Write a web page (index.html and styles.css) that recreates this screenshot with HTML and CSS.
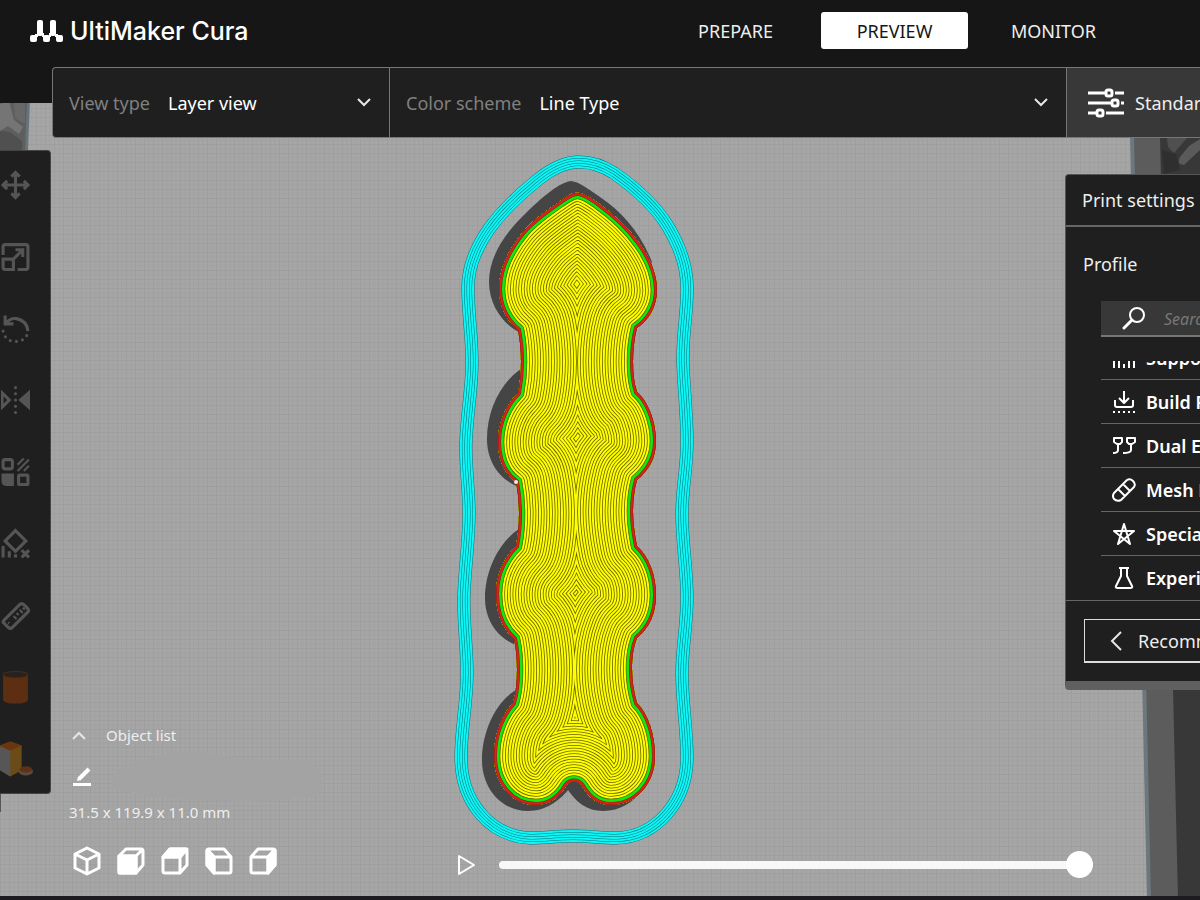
FILE: index.html
```html
<!DOCTYPE html>
<html lang="en">
<head>
    <meta charset="UTF-8">
    <meta name="viewport" content="width=device-width, initial-scale=1.0">
    <title>UltiMaker Cura</title>
    <link rel="stylesheet" href="styles.css">
</head>
<body>
<div class="app">
    <svg class="scene" viewBox="0 0 1200 900" preserveAspectRatio="xMidYMid slice" aria-hidden="true">
        <defs>
            <pattern id="grid" width="9" height="9" patternUnits="userSpaceOnUse">
                <path d="M0 .5H9M.5 0V9" stroke="#9e9e9e" stroke-width="1"/>
                <path d="M0 5H9M5 0V9" stroke="#a1a1a1" stroke-width="1"/>
            </pattern>
            <path id="model" d="M579 193C586 194 592 199 598 203C612 213 628 227 640 244C650 258 657 274 657 290C657 306 649 320 637 328C634 339 633 351 633 362C633 373 634 383 637 392C648 401 656 422 656 441C656 458 649 470 637 480C634 491 633 501 633 512C633 524 635 536 637 546C649 557 656 575 656 595C656 614 649 628 637 638C633 648 632 658 632 669C632 681 634 693 637 703C648 714 655 734 655 756C655 784 636 805 611 805C595 805 587 794 582 786C578 780 570 780 566 786C560 796 550 805 536 805C512 805 494 784 494 756C494 734 502 715 513 703C516 693 517 681 517 670C517 659 516 648 514 639C503 629 496 613 496 594C496 575 504 558 516 546C518 536 519 525 519 514C519 503 518 492 516 482C505 474 498 460 498 442C498 423 506 405 518 393C520 383 521 373 521 362C521 351 520 340 518 330C507 321 499 306 499 289C499 269 509 249 523 232C534 219 549 209 562 200C568 196 573 192 579 193Z"/>
            <path id="skirt" d="M579 162C592 162 603 166 614 173C634 187 654 204 667 225C680 246 688 267 687 292C687 314 682 338 683 364C684 390 687 416 687 442C687 468 682 488 682 514C682 542 687 570 687 598C687 624 682 648 682 673C682 702 687 730 687 757C687 802 656 837 616 838C602 838 588 836 573 836C558 836 544 838 530 838C490 836 461 802 461 757C461 729 467 702 467 673C467 646 463 621 464 594C465 567 469 540 469 513C469 488 465 465 466 441C467 414 472 388 472 362C472 337 468 312 468 288C468 266 477 246 489 229C502 211 519 195 535 182C548 171 563 162 579 162Z"/>
            <clipPath id="modelClip"><use href="#model"/></clipPath>
        </defs>
        <rect width="1200" height="900" fill="#a6a6a6"/>
        <rect width="1200" height="900" fill="url(#grid)"/>
        <path d="M122 768Q150 752 200 753Q250 760 310 762Q330 775 318 794Q260 806 200 800Q130 796 116 788Q108 778 122 768Z" fill="#a3a3a3"/>
        <path d="M0 780L0 812" stroke="#555" stroke-width="2"/>

        <!-- left edge of the plate -->
        <path d="M0 100H29L27 150H0Z" fill="#5e5e5e"/>
        <path d="M0 104L9 101L14 120L23 127L19 134L8 126L0 131Z" fill="#757575"/>
        <path d="M14 101H25V124L15 118Z" fill="#686868"/>
        <path d="M0 131L10 132L22 141V150H0Z" fill="#505050"/>
        <path d="M27 100H30L28 150H25Z" fill="#66737a"/>

        <!-- right edge of the plate -->
        <path d="M1131 136H1200V900H1148Z" fill="#5c5c5c"/>
        <path d="M1130 136H1134L1151 900H1147Z" fill="#6c787e"/>
        <path d="M1160 136H1200V900H1178Z" fill="#383838"/>
        <path d="M1167 138H1187L1174 153L1168 147Z" fill="#505050"/>
        <path d="M1189 146L1200 139V150L1184 165Q1176 164 1180 157Z" fill="#5a5a5a"/>
        <path d="M1162 150L1176 154L1180 170L1164 174Z" fill="#2f2f2f"/>

        <!-- shadow of the model on the plate -->
        <path d="M571 181C580 182 588 189 600 197C622 212 640 232 652 262L630 300H540V332H519C503 324 489 305 489 282C489 258 503 236 522 217C537 202 557 183 571 181Z" fill="#454545"/>
        <path d="M530 364C503 376 487 408 487 439C487 462 500 480 519 487L540 440ZM530 523C502 534 485 568 485 598C485 621 498 638 516 645L540 600ZM530 685C500 690 482 728 482 760C482 789 502 811 528 811C546 811 560 800 568 790C576 802 587 811 603 811C620 811 634 802 642 790L570 740Z" fill="#454545"/>

        <g fill="none" stroke-linejoin="round">
            <use href="#skirt" class="skirt-gap" stroke-width="13"/>
            <use href="#skirt" class="skirt-line" stroke-width="12"/>
            <use href="#skirt" class="skirt-gap" stroke-width="8"/>
            <use href="#skirt" class="skirt-line" stroke-width="7"/>
            <use href="#skirt" class="skirt-gap" stroke-width="3"/>
            <use href="#skirt" class="skirt-line" stroke-width="2"/>
        </g>
        <g clip-path="url(#modelClip)" fill="none">
            <use href="#model" fill="#ff0"/>
            <g id="infill" stroke-linejoin="round"></g>
            <use href="#model" stroke="#4a7a00" stroke-width="12"/>
            <use href="#model" stroke="#10e810" stroke-width="11"/>
            <use href="#model" stroke="#54400c" stroke-width="6"/>
            <use href="#model" stroke="#dc201c" stroke-width="5"/>
            <use href="#model" stroke="#9a1a18" stroke-width="1"/>
        </g>
        <circle cx="516" cy="482" r="2" fill="#eee"/>
    </svg>

    <header class="topbar">
        <div class="brand">
            <svg width="34" height="24" viewBox="0 0 34 24" fill="#fff" aria-hidden="true">
                <rect x="0" y="16" width="7" height="7" rx="2"/>
                <rect x="13" y="16" width="7" height="7" rx="2"/>
                <rect x="26" y="16" width="7" height="7" rx="2"/>
                <rect x="7" y="1" width="6" height="16" rx="2"/>
                <rect x="20" y="1" width="6" height="16" rx="2"/>
                <path d="M5 15H8V18H5ZM12 14H14V18H12ZM19 14H21V18H19ZM25 15H28V18H25Z"/>
            </svg>
            <span>UltiMaker Cura</span>
        </div>
        <nav class="stages">
            <button type="button">PREPARE</button>
            <button type="button" class="active">PREVIEW</button>
            <button type="button">MONITOR</button>
        </nav>
    </header>

    <div class="menubar">
        <div class="field view-type">
            <label for="viewType">View type</label>
            <select id="viewType"><option>Layer view</option><option>X-Ray view</option></select>
            <svg width="14" height="9" viewBox="0 0 14 9"><path d="M1 1L7 7L13 1"/></svg>
        </div>
        <div class="field scheme">
            <label for="colorScheme">Color scheme</label>
            <select id="colorScheme"><option>Line Type</option><option>Material Color</option></select>
            <svg width="14" height="9" viewBox="0 0 14 9"><path d="M1 1L7 7L13 1"/></svg>
        </div>
        <button type="button" class="setup">
            <svg width="38" height="32" viewBox="0 0 38 32" fill="none" stroke="#fff" stroke-width="3" aria-hidden="true">
                <path d="M1 6H18M28 6H37M1 16H24M34 16H37M1 26H9M19 26H37"/>
                <rect x="19" y="3" width="6" height="6" rx="2"/>
                <rect x="25" y="13" width="6" height="6" rx="2"/>
                <rect x="10" y="23" width="6" height="6" rx="2"/>
            </svg>
            <span>Standard</span>
        </button>
    </div>

    <main class="workspace">
        <div class="tools">
            <button type="button" aria-label="Move"><svg viewBox="0 0 28 28"><path d="M14 2V26M2 14H26M10 6L14 2L18 6M10 22L14 26L18 22M6 10L2 14L6 18M22 10L26 14L22 18"/></svg></button>
            <button type="button" aria-label="Scale"><svg viewBox="0 0 28 28"><path d="M2 12V4Q2 2 4 2H24Q26 2 26 4V24Q26 26 24 26H16M2 16H10Q12 16 12 18V26H4Q2 26 2 24ZM12 16L21 7M14 7H21V14"/></svg></button>
            <button type="button" aria-label="Rotate"><svg viewBox="0 0 28 28"><path d="M4 1V9H12M4 9Q9 3 15 4Q25 6 26 16"/><path d="M2 16Q4 26 14 26Q23 26 26 18" stroke-dasharray="0 6" stroke-linecap="round"/></svg></button>
            <button type="button" aria-label="Mirror"><svg viewBox="0 0 28 28"><path d="M1 7V21L8 14Z"/><path d="M28 6V22L19 14Z" fill="currentColor"/><path d="M14 2V27" stroke-dasharray="0 6" stroke-linecap="round"/></svg></button>
            <button type="button" aria-label="Per model settings"><svg viewBox="0 0 28 28"><rect x="2" y="2" width="9" height="9" rx="2"/><rect x="17" y="17" width="9" height="9" rx="1"/><path d="M2 17H11V26H5Q2 26 2 23Z" fill="currentColor"/><path d="M16 7L22 1M16 13L27 2M22 13L27 8" stroke-width="2"/></svg></button>
            <button type="button" aria-label="Support blocker"><svg viewBox="0 0 28 28"><path d="M14 1L24 11L14 21L4 11Z"/><path d="M2 16V27M8 21V27M14 24V27M20 20L27 27M27 20L20 27"/></svg></button>
            <button type="button" aria-label="Measure"><svg viewBox="0 0 28 28"><path d="M3 18L18 3Q20 1 22 3L26 7Q27 9 26 10L11 25Q9 27 7 25L3 21Q1 20 3 18Z"/><path d="M12 14L15 17M15 11L17 13M18 8L21 11M21 6L23 8M7 20L8 21" stroke-width="2"/></svg></button>
            <button type="button" aria-label="Cylinder"><svg viewBox="0 0 28 34"><path d="M2 5V29Q2 33 14 33Q26 33 26 29V5Z" fill="#5c2e12" stroke="none"/><ellipse cx="14" cy="5" rx="12" ry="3" fill="#262220" stroke="#4a2a16" stroke-width="1"/></svg></button>
            <button type="button" aria-label="Custom supports"><svg viewBox="0 0 32 34"><path d="M0 4L10 0L21 4V28L10 34L0 28Z" fill="#6b4c18" stroke="none"/><path d="M0 4L10 0L21 4L10 9Z" fill="#6b3510" stroke="none"/><path d="M0 5L10 9V34L0 28Z" fill="#565656" stroke="none"/><ellipse cx="25" cy="29" rx="7" ry="4" fill="#5a4a40" stroke="none"/><ellipse cx="25" cy="27" rx="6" ry="3" fill="#5f3214" stroke="none"/></svg></button>
        </div>

        <div class="info">
            <button type="button" class="object-list">
                <svg width="14" height="9" viewBox="0 0 14 9"><path d="M1 8L7 2L13 8"/></svg>
                <span>Object list</span>
            </button>
            <button type="button" class="rename" aria-label="Rename">
                <svg width="20" height="20" viewBox="0 0 20 20"><path d="M1 18.500H19" stroke-width="3"/><path d="M7 13L17 3" stroke-width="4"/><path d="M5 15L6 11L9 14Z" fill="#fff" stroke="none"/></svg>
            </button>
            <p class="dimensions">31.5 x 119.9 x 11.0 mm</p>
            <div class="views">
                <button type="button" aria-label="3D view"><svg viewBox="0 0 28 28"><path d="M14 1L26 7V21L14 27L2 21V7ZM2 7L14 13L26 7M14 13V27"/></svg></button>
                <button type="button" aria-label="Front view"><svg viewBox="0 0 28 28"><path d="M2 9L9 2H24Q26 2 26 4V18L19 26H4Q2 26 2 24ZM2 9H19V26M19 9L26 2"/><path d="M2 9H19V26H2Z" fill="#fff"/></svg></button>
                <button type="button" aria-label="Top view"><svg viewBox="0 0 28 28"><path d="M2 10L9 2H24Q26 2 26 4V18L19 26H4Q2 26 2 24ZM2 10H19V26M19 10L26 2"/><path d="M2 10L9 2H26L19 10Z" fill="#fff"/></svg></button>
                <button type="button" aria-label="Left view"><svg viewBox="0 0 28 28"><path d="M26 10L19 2H4Q2 2 2 4V18L9 26H24Q26 26 26 24ZM26 10H9V26M9 10L2 2"/><path d="M2 3L9 10V26L2 18Z" fill="#fff"/></svg></button>
                <button type="button" aria-label="Right view"><svg viewBox="0 0 28 28"><path d="M2 10L9 2H24Q26 2 26 4V18L19 26H4Q2 26 2 24ZM2 10H19V26M19 10L26 2"/><path d="M19 10L26 3V18L19 26Z" fill="#fff"/></svg></button>
            </div>
        </div>

        <div class="simulation">
            <button type="button" aria-label="Play"><svg width="20" height="22" viewBox="0 0 20 22"><path d="M2 2V20L17 11Z"/></svg></button>
            <input type="range" min="0" max="100" value="100" aria-label="Path position">
        </div>

        <aside class="settings">
            <h2>Print settings</h2>
            <div class="profile">
                <h3>Profile</h3>
                <div class="search">
                    <svg width="24" height="24" viewBox="0 0 24 24" fill="none" stroke="#fff" stroke-width="2" stroke-linecap="round" aria-hidden="true"><circle cx="15" cy="9" r="7"/><path d="M10 14L2 22" stroke-width="3"/></svg>
                    <input type="search" placeholder="Search settings" aria-label="Search settings">
                </div>
                <div class="categories">
                    <button type="button"><svg viewBox="0 0 24 24"><path d="M2 12V22M7 15V22M12 18V22M17 15V22M22 12V22M3 3H21L12 11Z"/></svg><span>Support</span></button>
                    <button type="button"><svg viewBox="0 0 24 24"><path d="M12 1V12M7 8L12 13L17 8M3 10V15Q3 17 5 17H19Q21 17 21 15V10"/><path d="M1 22H23" stroke-width="2" stroke-dasharray="2 3"/></svg><span>Build Plate Adhesion</span></button>
                    <button type="button"><svg viewBox="0 0 24 24"><path d="M2 4H10V8L8 10H5L2 8ZM15 4H23V8L20 10H17L15 8ZM6 10V16Q6 19 1 19M19 10V16Q19 19 11 19"/></svg><span>Dual Extrusion</span></button>
                    <button type="button"><svg viewBox="0 0 24 24"><path d="M2 15L15 2Q18 0 21 3Q24 6 22 9L9 22Q5 24 2 21Q0 18 2 15ZM6 11L13 18M11 6L18 13"/></svg><span>Mesh Fixes</span></button>
                    <button type="button"><svg viewBox="0 0 24 24"><path d="M12 2L18 22L2 9H22L6 22Z"/></svg><span>Special Modes</span></button>
                    <button type="button"><svg viewBox="0 0 24 24"><path d="M7 2H17M9 2V10L4 20Q3 22 6 22H18Q21 22 20 20L15 10V2"/></svg><span>Experimental</span></button>
                </div>
            </div>
            <div class="panel-footer">
                <button type="button"><svg width="12" height="20" viewBox="0 0 12 20"><path d="M11 1L2 10L11 19"/></svg><span>Recommended</span></button>
            </div>
        </aside>
    </main>
    <div class="bottom-edge"></div>
</div>
<script>
    // Concentric infill: wide strokes first, narrower ones over them, clipped to the model
    const infill = document.getElementById('infill');
    const spacing = 2.75;
    for (let i = 29; i > 1; i--) {
        addRing('#686400', i * spacing * 2 + 1.6);
        addRing('#ff0', i * spacing * 2);
    }

    function addRing(color, width) {
        const ring = document.createElementNS('http://www.w3.org/2000/svg', 'use');
        ring.setAttribute('href', '#model');
        ring.setAttribute('stroke', color);
        ring.setAttribute('stroke-width', width);
        infill.appendChild(ring);
    }
</script>
</body>
</html>
```

FILE: styles.css
```css
* {
    box-sizing: border-box;
}
body {
    margin: 0;
    font-family: "Noto Sans", sans-serif;
    font-size: 18px;
    color: #eee;
    background: #a3a3a3;
}
button, input, select {
    font: inherit;
    color: inherit;
    border: none;
    background: none;
    padding: 0;
    margin: 0;
}
button {
    cursor: pointer;
}
.app {
    position: relative;
    display: flex;
    flex-direction: column;
    min-height: 100vh;
    overflow: hidden;
}
.scene {
    position: absolute;
    inset: 0;
    width: 100%;
    height: 100%;
    z-index: -1;
}
.skirt-gap {
    stroke: #0a7478;
}
.skirt-line {
    stroke: #0ff4f4;
}

/* Top bar */
.topbar {
    display: flex;
    justify-content: space-between;
    align-items: flex-start;
    height: 103px;
    padding: 12px 73px 0 30px;
    background: #161616;
}
.brand {
    display: flex;
    align-items: center;
    gap: 6px;
    height: 37px;
    font-family: Inter, sans-serif;
    font-size: 25px;
    font-weight: 500;
    color: #fff;
}
.stages {
    display: flex;
    gap: 12px;
}
.stages button {
    width: 147px;
    height: 37px;
    border-radius: 3px;
}
.stages .active {
    background: #fff;
    color: #161616;
}

/* Menu bar */
.menubar {
    display: flex;
    height: 71px;
    margin: -36px 0 0 52px;
    border: 1px solid #777;
    border-right: none;
    border-radius: 4px 0 0 4px;
    background: #1f1f1f;
    overflow: hidden;
}
.field {
    display: flex;
    align-items: center;
    gap: 18px;
    padding: 0 18px 0 16px;
    border-right: 1px solid #777;
}
.field label {
    color: #808080;
    white-space: nowrap;
}
.field select {
    flex: 1;
    min-width: 0;
    appearance: none;
    color: #fff;
}
.field svg, .object-list svg, .panel-footer svg {
    flex: none;
    fill: none;
    stroke: #e6e6e6;
    stroke-width: 2;
    pointer-events: none;
}
.view-type {
    flex: 0 0 337px;
}
.scheme {
    flex: 1;
}
.setup {
    display: flex;
    flex: 0 0 133px;
    align-items: center;
    gap: 10px;
    padding-left: 20px;
    background: #383838;
    overflow: hidden;
}
.setup svg {
    flex: none;
}

/* Workspace */
.workspace {
    display: flex;
    flex: 1;
    align-items: flex-start;
    padding-top: 12px;
}
.tools {
    display: flex;
    flex: 0 0 51px;
    flex-direction: column;
    justify-content: space-between;
    align-items: flex-start;
    min-height: 644px;
    padding: 16px 0;
    border: 1px solid #444;
    border-left: none;
    border-radius: 0 4px 4px 0;
    background: #1f1f1f;
}
.tools button {
    display: flex;
    padding-left: 1px;
    color: #555;
}
.tools svg {
    width: 29px;
    height: 36px;
    fill: none;
    stroke: currentColor;
    stroke-width: 3;
}
.tools button:last-child {
    padding-left: 0;
}
.tools button:last-child svg {
    width: 33px;
}
.info {
    display: flex;
    flex-direction: column;
    align-items: flex-start;
    align-self: flex-end;
    width: 190px;
    padding: 0 0 21px 18px;
    font-size: 15px;
    line-height: 24px;
}
.object-list {
    display: flex;
    align-items: center;
    gap: 20px;
    padding-left: 3px;
    font-size: 15px;
}
.rename {
    display: flex;
    padding: 19px 0 14px 3px;
}
.rename svg {
    fill: none;
    stroke: #fff;
}
.dimensions {
    margin: 0;
}
.views {
    display: flex;
    gap: 16px;
    padding: 23px 0 0 4px;
}
.views button {
    display: flex;
}
.views svg {
    width: 28px;
    height: 28px;
    overflow: visible;
    fill: none;
    stroke: #fff;
    stroke-width: 3;
    stroke-linejoin: round;
}
.simulation {
    display: flex;
    flex: 1;
    align-items: center;
    align-self: flex-end;
    gap: 22px;
    margin: 0 -28px 18px 216px;
}
.simulation button {
    display: flex;
}
.simulation svg {
    fill: none;
    stroke: #fff;
    stroke-width: 2;
    stroke-linejoin: round;
}
.simulation input {
    flex: 1;
    min-width: 0;
    height: 27px;
    appearance: none;
}
.simulation input::-webkit-slider-runnable-track {
    height: 8px;
    border-radius: 4px;
    background: #f8f8f8;
}
.simulation input::-webkit-slider-thumb {
    appearance: none;
    width: 27px;
    height: 27px;
    margin-top: -10px;
    border-radius: 50%;
    background: #fff;
}

/* Print settings */
.settings {
    flex: 0 0 135px;
    margin-top: 24px;
    border: 1px solid #555;
    border-right: none;
    border-bottom: 9px solid #606060;
    border-radius: 4px 0 0 4px;
    background: #1f1f1f;
    overflow: hidden;
    white-space: nowrap;
}
.settings h2, .settings h3 {
    margin: 0;
    font-size: 18px;
    font-weight: normal;
}
.settings h2 {
    padding-left: 16px;
    line-height: 50px;
    border-bottom: 2px solid #666;
}
.profile {
    padding-left: 35px;
}
.settings h3 {
    margin-left: -18px;
    line-height: 74px;
}
.search {
    display: flex;
    align-items: center;
    gap: 18px;
    height: 36px;
    padding-left: 21px;
    border-bottom: 2px solid #777;
    background: #383838;
}
.search svg {
    flex: none;
}
.search input {
    padding-top: 2px;
    font-size: 16px;
    font-style: italic;
}
.search input::placeholder {
    color: #777;
}
.categories {
    display: flex;
    flex-direction: column;
    justify-content: flex-end;
    height: 239px;
    margin-top: 24px;
    overflow: hidden;
}
.categories button {
    display: flex;
    flex: 0 0 44px;
    align-items: center;
    gap: 10px;
    padding-left: 11px;
    border-bottom: 1px solid #666;
    font-weight: 600;
    color: #fff;
}
.categories button:last-child {
    border-bottom: none;
}
.categories svg {
    flex: none;
    width: 24px;
    height: 24px;
    fill: none;
    stroke: #fff;
    stroke-width: 2;
    stroke-linejoin: round;
}
.panel-footer {
    padding: 18px 0 18px 18px;
    border-top: 1px solid #666;
}
.panel-footer button {
    display: flex;
    align-items: center;
    gap: 16px;
    width: 100%;
    height: 44px;
    padding-left: 25px;
    border: 1px solid #ddd;
    border-bottom-width: 2px;
    border-right: none;
}
.bottom-edge {
    height: 4px;
    background: #1d1a20;
}
```
